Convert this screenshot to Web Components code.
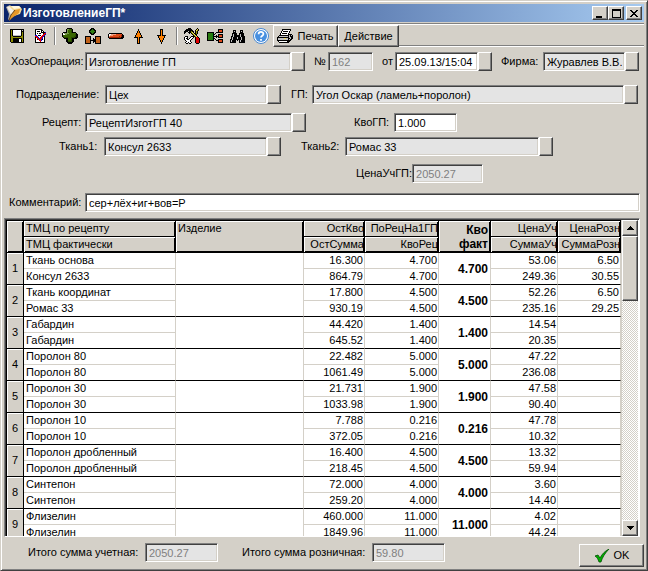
<!DOCTYPE html>
<html lang="ru">
<head>
<meta charset="utf-8">
<title>ИзготовлениеГП*</title>
<style>
	body {
		margin: 0;
		font: 11px/15px "Liberation Sans", Arial, sans-serif;
		color: #000;
		--face: #d4d0c8;
		--shadow: #808080;
		--dark: #404040;
		--readonly: #e4e4e4;
	}
</style>
</head>
<body>
<app-window caption="ИзготовлениеГП*">
	<tool-bar></tool-bar>

	<form-row style="--top: 5px; --gap: 9px; --left: 7px; --right: 5px">
		<form-field class="grow" label="ХозОперация:" value="Изготовление ГП" readonly picker style="--label: 74px"></form-field>
		<form-field label="№" value="162" disabled style="--label: 14px; --width: 59px"></form-field>
		<form-field label="от" value="25.09.13/15:04" picker style="--label: 13px; --width: 110px"></form-field>
		<form-field label="Фирма:" value="Журавлев В.В." readonly picker style="--label: 42px; --width: 138px"></form-field>
	</form-row>
	<form-row style="--top: 14px; --gap: 10px; --left: 12px; --right: 6px">
		<form-field label="Подразделение:" value="Цех" readonly picker style="--label: 89px; --width: 265px"></form-field>
		<form-field class="grow" label="ГП:" value="Угол Оскар (ламель+поролон)" readonly picker style="--label: 21px"></form-field>
	</form-row>
	<form-row style="--top: 9px; --gap: 48px; --left: 38px">
		<form-field label="Рецепт:" value="РецептИзготГП 40" readonly picker style="--label: 43px; --width: 264px"></form-field>
		<form-field label="КвоГП:" value="1.000" style="--label: 40px; --width: 103px"></form-field>
	</form-row>
	<form-row style="--top: 5px; --gap: 20px; --left: 55px">
		<form-field label="Ткань1:" value="Консул 2633" readonly picker style="--label: 45px; --width: 222px"></form-field>
		<form-field label="Ткань2:" value="Ромас 33" readonly picker style="--label: 44px; --width: 252px"></form-field>
	</form-row>
	<form-row style="--top: 8px; --gap: 0px; --left: 352px">
		<form-field label="ЦенаУчГП:" value="2050.27" disabled style="--label: 56px; --width: 127px"></form-field>
	</form-row>
	<form-row style="--top: 10px; --gap: 0px; --left: 5px; --right: 4px">
		<form-field class="grow" label="Комментарий:" value="сер+лёх+иг+вов=Р" style="--label: 76px"></form-field>
	</form-row>

	<goods-grid></goods-grid>

	<form-row slot="footer" style="--top: 6px; --gap: 24px; --left: 24px">
		<form-field label="Итого сумма учетная:" value="2050.27" disabled style="--label: 117px; --width: 190px"></form-field>
		<form-field label="Итого сумма розничная:" value="59.80" disabled style="--label: 130px; --width: 203px"></form-field>
		<ok-button></ok-button>
	</form-row>
</app-window>

<script>
const PALETTE = {
	k: '#000000', w: '#ffffff', o: '#8c8c00', y: '#f0e060', g: '#3a6600', G: '#2a4a00', l: '#7c9c50',
	n: '#108010', b: '#c06018', B: '#0000e0', r: '#e00000', R: '#a02000', O: '#ff8000', s: '#808080',
	e: '#c0c0c0', p: '#f0a080', t: '#e04818', f: '#2c7c10'
};

// one character per pixel, a dot is transparent
const ICONS = {
	save: [
		'kkkkkkkkkkkkkk',
		'kokwwwwwwwwkek',
		'kokwwwwwwwwkkk',
		'kokwwwwwwwwkok',
		'kokwwwwwwwwkok',
		'kokwwwwwwwwkok',
		'kokeeeeeeeekok',
		'kookkkkkkkkook',
		'kooooooooooook',
		'kookkkkkkkkkok',
		'kookkkkkkwwkok',
		'kookkkkkkwwkok',
		'kookkkkkkwwkok',
		'.kkkkkkkkkkkkk'
	],
	check: [
		'.kkkkkkk....',
		'.kwwwwwkk...',
		'.kwkkkwkwk..',
		'.kwwwwwkkkkB',
		'.kwkwkkwwkrr',
		'.kwwwwwwwrrB',
		'.BBwkkkwrrB.',
		'.rrBwwwrrBk.',
		'.krrBwrrBwk.',
		'.kwrrBrrBwk.',
		'.kwkrrrBkwk.',
		'.kwwwrrBwwk.',
		'.kwwwwrwwwk.',
		'.kkkkkkkkkk.'
	],
	plus: [
		'.....kkkkk......',
		'....kllggGk.....',
		'....klgggGk.....',
		'....klgggGk.....',
		'.kkkklgggGkkkk..',
		'kwlllllgggggggk.',
		'kwwllggggggggGkk',
		'kggggggggggggGkk',
		'kGggggggggggGGkk',
		'.kGGGGgggGGGGkkk',
		'..kkkkgggGkkkkk.',
		'....kkgggGkk....',
		'....kkgggGkk....',
		'....kkGGGGkk....',
		'.....kkkkkk.....',
		'......kkkk......'
	],
	network: [
		'......kkk.......',
		'.....kkfkk......',
		'....kkfffkk.....',
		'....kfffffk.....',
		'....kkfffkk.....',
		'.....kkfkk......',
		'......kkk.......',
		'................',
		'kkkkkk....kkkkkk',
		'kbbbbk....kbbbbk',
		'kbbbbk..k.kbbbbk',
		'kbbbbk..kkkbbbbk',
		'kbbbbkkkkkkbbbbk',
		'kbbbbk..kkkbbbbk',
		'kbbbbk..k.kbbbbk',
		'kkkkkk....kkkkkk'
	],
	minus: [
		'.kkkkkkkkkkkkk..',
		'kwwpppppttttttk.',
		'kwpppttttttbtRkk',
		'kpttttttbtbRtRkk',
		'kRRRRRRRRRRRRkkk',
		'.kkkkkkkkkkkkkk.'
	],
	up: [
		'....k....',
		'....k....',
		'...kOk...',
		'...kOk...',
		'..kOOOk..',
		'..kOOOk..',
		'.kOOOOOk.',
		'.kOOOOOk.',
		'kkkkOkkkk',
		'...kOk...',
		'...kOk...',
		'...kOk...',
		'...kOk...',
		'...kOk...',
		'...kkk...'
	],
	tools: [
		'....kkk......k..',
		'..kkkkkk....kyk.',
		'.kkkkkkkk..kyok.',
		'kkkk.kkokk.kok..',
		'kk..kkkoyk.kok..',
		'k....k.koykkok..',
		'........koykk...',
		'.........koyk...',
		'.kkk...kkkkoyk..',
		'kwwk..kwwk.krrk.',
		'kwkk.kwwk..krrrk',
		'kwwkkwwk...krrrk',
		'.kwwwwk....krrrk',
		'..kwwwk....krrrk',
		'.kwwkwwk...krrrk',
		'..kk.kk.....kkk.'
	],
	tree: [
		'...........kkkkk',
		'...........ktttk',
		'...........ktttk',
		'kkkkkkk..kkkkkkk',
		'kffffnk.k.......',
		'kffffnkk...kkkkk',
		'kffffnk..k.ktttk',
		'kffffnkkkkkktttk',
		'kffffnk..k.kkkkk',
		'kffffnkk........',
		'kffffnk.k..kkkkk',
		'kkkkkkk..kkktttk',
		'...........ktttk',
		'...........kkkkk'
	],
	find: [
		'...kkk....kkk..',
		'...kek....kek..',
		'...kkk....kkk..',
		'..kkkkk..kkkkk.',
		'..kekkk..kekkk.',
		'..kekkkkkkekkk.',
		'.kkekkkkkkekkkk',
		'.kekkkkekkkekkk',
		'.kekkkkekkkekkk',
		'kkekkkkkkkkekkk',
		'kekkkk.k.kekkkk',
		'kekkkk...kekkkk',
		'kkkkkk...kkkkkk'
	],
	print: [
		'.....kkkkkkkkk..',
		'.....kwwwwwwwk..',
		'....kwkkkkkwk...',
		'....kwwwwwwwk...',
		'...kwkkkkkwk....',
		'...kwwwwwwwkkkk.',
		'..kkkkkkkkkkekek',
		'.keeeeeeeeekekkk',
		'kkkkkkkkkkkkeekk',
		'keeeeeeyyeekkekk',
		'keeeeeeeeeekekk.',
		'kkkkkkkkkkkkkk..',
		'.kwwwwwwwwkkk...',
		'..kkkkkkkkkk....'
	]
};
ICONS.down = [...ICONS.up].reverse();

function pixelIcon(name) {
	const rows = ICONS[name];
	const width = rows[0].length;
	let rects = '';
	rows.forEach((row, y) => {
		for (const run of row.matchAll(/([^.])\1*/g)) {
			rects += `<rect x="${run.index}" y="${y}" width="${run[0].length}" height="1" fill="${PALETTE[run[1]]}"/>`;
		}
	});
	return `<svg width="${width}" height="${rows.length}" viewBox="0 0 ${width} ${rows.length}" shape-rendering="crispEdges" aria-hidden="true">${rects}</svg>`;
}

const RAISED = `
	border: 1px solid;
	border-color: #fff var(--dark) var(--dark) #fff;
	box-shadow: inset -1px -1px 0 var(--shadow);
	background: var(--face);
	border-radius: 0;
	box-sizing: border-box;
	padding: 0;
	margin: 0;
	font: inherit;
	color: inherit;
`;

class AppWindow extends HTMLElement {
	constructor() {
		super();
		this.attachShadow({mode: 'open'});
	}

	connectedCallback() {
		this.shadowRoot.innerHTML = `
			<style>
				:host {
					display: flex;
					flex-direction: column;
					box-sizing: border-box;
					height: 100vh;
					padding: 2px;
					background: var(--face);
					border: 1px solid;
					border-color: var(--face) var(--dark) var(--dark) var(--face);
					box-shadow: inset 1px 1px 0 #fff, inset -1px -1px 0 var(--shadow);
				}
				header {
					display: flex;
					align-items: center;
					height: 18px;
					margin: 1px 1px;
					padding: 0 2px;
					background: linear-gradient(90deg, #0a246a, #a6caf0);
					color: #fff;
				}
				h1 {
					flex: 1;
					margin: 0 0 0 1px;
					font-size: 12px;
					line-height: 18px;
				}
				button {
					${RAISED}
					width: 16px;
					height: 14px;
					display: grid;
					place-items: center;
				}
				.close { margin-left: 2px; }
				main {
					flex: 1;
					min-height: 0;
					display: flex;
					flex-direction: column;
					margin: 0 1px;
				}
				footer { margin: 0 1px 1px; }
			</style>
			<header>
				<svg width="16" height="16" viewBox="0 0 16 16" aria-hidden="true">
					<path d="M0 2 4 0 9 5 5 13 2 15 3 9Z" fill="#b8b4a8"/>
					<path d="M1 2 4 1 8 6 5 10Z" fill="#f4f0e8"/>
					<path d="M3 1 13 1 16 4 14 9 8 11 9 6 6 4Z" fill="#f4d890"/>
					<path d="M5 1 13 1 15 3 8 4Z" fill="#fff8e0"/>
					<path d="M9 5 14 4 13 8 6 13 3 16 5 10Z" fill="#e89828"/>
					<path d="M9 5 5 10 3 15" stroke="#704818" fill="none"/>
				</svg>
				<h1></h1>
				<button type="button" aria-label="Свернуть"><svg width="10" height="9" shape-rendering="crispEdges"><path d="M1 7h6v2H1z"/></svg></button>
				<button type="button" aria-label="Развернуть"><svg width="9" height="9" shape-rendering="crispEdges"><path d="M0 0h9v9H0zM1 2v6h7V2z" fill-rule="evenodd"/></svg></button>
				<button type="button" class="close" aria-label="Закрыть"><svg width="8" height="7" viewBox="0 0 8 7" shape-rendering="crispEdges"><path d="M0 0h2v1h1v1h2V1h1V0h2v1H7v1H6v1H5v1h1v1h1v1h1v1H6V6H5V5H3v1H2v1H0V6h1V5h1V4h1V3H2V2H1V1H0z"/></svg></button>
			</header>
			<main><slot></slot></main>
			<footer><slot name="footer"></slot></footer>
		`;
		this.shadowRoot.querySelector('h1').textContent = this.getAttribute('caption');
	}
}

class ToolBar extends HTMLElement {
	constructor() {
		super();
		this.attachShadow({mode: 'open'});
	}

	static iconButton(icon, title) {
		return `<button type="button" class="icon" aria-label="${title}">${pixelIcon(icon)}</button>`;
	}

	connectedCallback() {
		this.shadowRoot.innerHTML = `
			<style>
				:host {
					display: flex;
					height: 22px;
					padding-left: 1px;
					border-top: 1px solid var(--shadow);
					box-shadow: inset 0 1px 0 #fff;
					padding-top: 1px;
				}
				.icon {
					width: 23px;
					padding: 0;
					border: 0;
					background: none;
					display: grid;
					place-items: center;
				}
				i {
					width: 0;
					margin: 2px 2px 2px 3px;
					border-left: 1px solid var(--shadow);
					border-right: 1px solid #fff;
				}
				.text {
					${RAISED}
					display: flex;
					align-items: center;
					justify-content: center;
					gap: 4px;
					height: 22px;
				}
				.print { width: 65px; margin-left: 1px; }
				.action { width: 61px; }
				.rest {
					flex: 1;
					border-bottom: 1px solid #fff;
					box-shadow: inset 0 -1px 0 var(--shadow);
				}
			</style>
			${ToolBar.iconButton('save', 'Сохранить')}
			${ToolBar.iconButton('check', 'Провести')}
			<i></i>
			${ToolBar.iconButton('plus', 'Добавить')}
			${ToolBar.iconButton('network', 'Добавить по рецепту')}
			${ToolBar.iconButton('minus', 'Удалить')}
			${ToolBar.iconButton('up', 'Вверх')}
			${ToolBar.iconButton('down', 'Вниз')}
			<i></i>
			${ToolBar.iconButton('tools', 'Настройки')}
			${ToolBar.iconButton('tree', 'Структура')}
			${ToolBar.iconButton('find', 'Найти')}
			<button type="button" class="icon" aria-label="Справка">
				<svg width="16" height="16" viewBox="0 0 16 16" aria-hidden="true">
					<circle cx="8" cy="8" r="7.5" fill="#fff" stroke="#4888d0"/>
					<circle cx="8" cy="8" r="6" fill="#4890e0"/>
					<path d="M5.6 6.2C5.6 3.2 10.4 3.2 10.4 6 10.4 7.8 8 7.6 8 9.6M8 11v1.8" fill="none" stroke="#fff" stroke-width="1.8"/>
				</svg>
			</button>
			<button type="button" class="text print">${pixelIcon('print')}Печать</button>
			<button type="button" class="text action">Действие</button>
			<span class="rest"></span>
		`;
	}
}

class FormRow extends HTMLElement {
	constructor() {
		super();
		this.attachShadow({mode: 'open'});
		this.shadowRoot.innerHTML = `
			<style>
				:host {
					display: flex;
					align-items: flex-start;
					gap: var(--gap);
					padding: var(--top) var(--right, 0) 0 var(--left);
				}
			</style>
			<slot></slot>
		`;
	}
}

class FormField extends HTMLElement {
	constructor() {
		super();
		this.attachShadow({mode: 'open'});
	}

	connectedCallback() {
		const picker = this.hasAttribute('picker');
		this.shadowRoot.innerHTML = `
			<style>
				:host {
					display: flex;
					align-items: center;
					flex: 0 1 var(--width, auto);
					min-width: 0;
					height: 19px;
				}
				:host(.grow) { flex: 1 1 0; }
				label {
					flex: 0 0 var(--label);
					white-space: nowrap;
				}
				input {
					flex: 1;
					min-width: 0;
					width: 0;
					height: 19px;
					box-sizing: border-box;
					margin: 0;
					padding: 1px 2px 0 3px;
					border: 1px solid;
					border-color: var(--shadow) #fff #fff var(--shadow);
					border-radius: 0;
					box-shadow: inset 1px 1px 0 var(--dark), inset -1px -1px 0 var(--face);
					background: #fff;
					font: inherit;
					color: #000;
				}
				input:read-only { background: var(--readonly); }
				input:disabled { color: var(--shadow); }
				button {
					${RAISED}
					flex: 0 0 14px;
					height: 19px;
				}
			</style>
			<label for="box"></label>
			<input id="box" type="text">
			${picker ? '<button type="button" aria-label="Выбрать"></button>' : ''}
		`;
		const input = this.shadowRoot.querySelector('input');
		this.shadowRoot.querySelector('label').textContent = this.getAttribute('label');
		input.value = this.getAttribute('value');
		input.readOnly = this.hasAttribute('readonly');
		input.disabled = this.hasAttribute('disabled');
	}
}

// [по рецепту, фактически, ОстКво, ОстСумма, ПоРецНа1ГП, КвоРец, Кво факт, ЦенаУч, СуммаУч, ЦенаРозн, СуммаРозн]
const GOODS = [
	['Ткань основа', 'Консул 2633', '16.300', '864.79', '4.700', '4.700', '4.700', '53.06', '249.36', '6.50', '30.55'],
	['Ткань координат', 'Ромас 33', '17.800', '930.19', '4.500', '4.500', '4.500', '52.26', '235.16', '6.50', '29.25'],
	['Габардин', 'Габардин', '44.420', '645.52', '1.400', '1.400', '1.400', '14.54', '20.35', '', ''],
	['Поролон 80', 'Поролон 80', '22.482', '1061.49', '5.000', '5.000', '5.000', '47.22', '236.08', '', ''],
	['Поролон 30', 'Поролон 30', '21.731', '1033.98', '1.900', '1.900', '1.900', '47.58', '90.40', '', ''],
	['Поролон 10', 'Поролон 10', '7.788', '372.05', '0.216', '0.216', '0.216', '47.78', '10.32', '', ''],
	['Поролон дробленный', 'Поролон дробленный', '16.400', '218.45', '4.500', '4.500', '4.500', '13.32', '59.94', '', ''],
	['Синтепон', 'Синтепон', '72.000', '259.20', '4.000', '4.000', '4.000', '3.60', '14.40', '', ''],
	['Флизелин', 'Флизелин', '460.000', '1849.96', '11.000', '11.000', '11.000', '4.02', '44.24', '', '']
];

class GoodsGrid extends HTMLElement {
	constructor() {
		super();
		this.attachShadow({mode: 'open'});
	}

	static rows() {
		return GOODS.map((g, i) => `
			<tr>
				<th rowspan="2" scope="row">${i + 1}</th>
				<td class="name">${g[0]}</td><td rowspan="2" class="end"></td>
				<td>${g[2]}</td><td>${g[4]}</td>
				<td rowspan="2" class="fact end">${g[6]}</td>
				<td>${g[7]}</td><td>${g[9]}</td>
			</tr>
			<tr class="second">
				<td class="name">${g[1]}</td><td>${g[3]}</td><td>${g[5]}</td><td>${g[8]}</td><td>${g[10]}</td>
			</tr>
		`).join('');
	}

	connectedCallback() {
		this.shadowRoot.innerHTML = `
			<style>
				:host {
					flex: 1;
					min-height: 0;
					display: flex;
					margin: 6px 4px 0 0;
					border: 1px solid;
					border-color: var(--shadow) #fff #fff var(--shadow);
					box-shadow: inset 1px 1px 0 var(--dark);
					padding: 1px 1px 0 1px;
					background: #fff;
				}
				.view {
					flex: 1;
					min-width: 0;
					overflow: hidden;
				}
				table {
					width: 100%;
					table-layout: fixed;
					border-collapse: separate;
					border-spacing: 0;
					border-top: 1px solid #000;
					border-left: 1px solid #000;
				}
				th, td {
					height: 15px;
					padding: 0 1px 0 2px;
					border-right: 1px solid var(--face);
					border-bottom: 1px solid var(--face);
					text-align: right;
					font-weight: normal;
					white-space: nowrap;
					overflow: hidden;
				}
				th {
					background: var(--face);
					border-color: #000;
					box-shadow: inset 1px 1px 0 #fff;
				}
				thead th { padding-right: 0; }
				thead .name, .name { text-align: left; }
				thead [rowspan] { vertical-align: top; }
				tbody th { text-align: center; padding: 0; }
				.second td, .end { border-bottom-color: #000; }
				.fact {
					font-size: 12px;
					font-weight: bold;
					line-height: 14px;
					padding-right: 2px;
				}
				thead .fact { padding: 2px 2px 0 0; }
				thead th + th, thead tr + tr th { box-shadow: inset 1px 1px 0 #fff, inset -1px 0 0 #000; }
				thead tr + tr th { box-shadow: inset 1px 1px 0 #fff, inset -1px -1px 0 #000; }
				thead [rowspan], thead th + [rowspan] { box-shadow: inset 1px 1px 0 #fff, inset -1px -1px 0 #000; }
				.scroll {
					flex: 0 0 16px;
					display: flex;
					flex-direction: column;
					border-left: 1px solid var(--face);
					background: repeating-conic-gradient(#fff 0 25%, var(--face) 0 50%) 0 0 / 2px 2px;
				}
				.scroll button {
					${RAISED}
					height: 16px;
					display: grid;
					place-items: center;
				}
				.thumb {
					${RAISED}
					height: 65px;
					margin-bottom: auto;
				}
			</style>
			<div class="view">
				<table>
					<colgroup>
						<col style="width: 17px"><col style="width: 152px"><col>
						<col style="width: 61px"><col style="width: 74px"><col style="width: 52px">
						<col style="width: 67px"><col style="width: 63px">
					</colgroup>
					<thead>
						<tr>
							<th rowspan="2"></th>
							<th class="name">ТМЦ по рецепту</th>
							<th rowspan="2" class="name">Изделие</th>
							<th>ОстКво</th><th>ПоРецНа1ГП</th>
							<th rowspan="2" class="fact">Кво<br>факт</th>
							<th>ЦенаУч</th><th>ЦенаРозн</th>
						</tr>
						<tr>
							<th class="name">ТМЦ фактически</th><th>ОстСумма</th><th>КвоРец</th><th>СуммаУч</th><th>СуммаРозн</th>
						</tr>
					</thead>
					<tbody>${GoodsGrid.rows()}</tbody>
				</table>
			</div>
			<div class="scroll">
				<button type="button" aria-label="Вверх"><svg width="7" height="4" shape-rendering="crispEdges"><path d="M3 0h1v1h1v1h1v1h1v1H0V3h1V2h1V1h1z"/></svg></button>
				<div class="thumb"></div>
				<button type="button" aria-label="Вниз"><svg width="7" height="4" shape-rendering="crispEdges"><path d="M0 0h7v1H6v1H5v1H4v1H3V3H2V2H1V1H0z"/></svg></button>
			</div>
		`;
	}
}

class OkButton extends HTMLElement {
	constructor() {
		super();
		this.attachShadow({mode: 'open'});
		this.shadowRoot.innerHTML = `
			<style>
				:host {
					display: block;
					margin-left: auto;
					padding-top: 1px;
				}
				button {
					${RAISED}
					display: flex;
					align-items: center;
					justify-content: center;
					gap: 4px;
					width: 65px;
					height: 23px;
				}
			</style>
			<button type="button">
				<svg width="16" height="14" viewBox="0 0 16 14" aria-hidden="true">
					<path d="M1 7 4 6 6 9C8 5 11 2 15 0 11 4 8 9 7 13L5 13C4 10 3 8 1 7Z" fill="#00b000" stroke="#005000" stroke-width="0.8"/>
				</svg>
				OK
			</button>
		`;
	}
}

customElements.define('app-window', AppWindow);
customElements.define('tool-bar', ToolBar);
customElements.define('form-row', FormRow);
customElements.define('form-field', FormField);
customElements.define('goods-grid', GoodsGrid);
customElements.define('ok-button', OkButton);
</script>
</body>
</html>
